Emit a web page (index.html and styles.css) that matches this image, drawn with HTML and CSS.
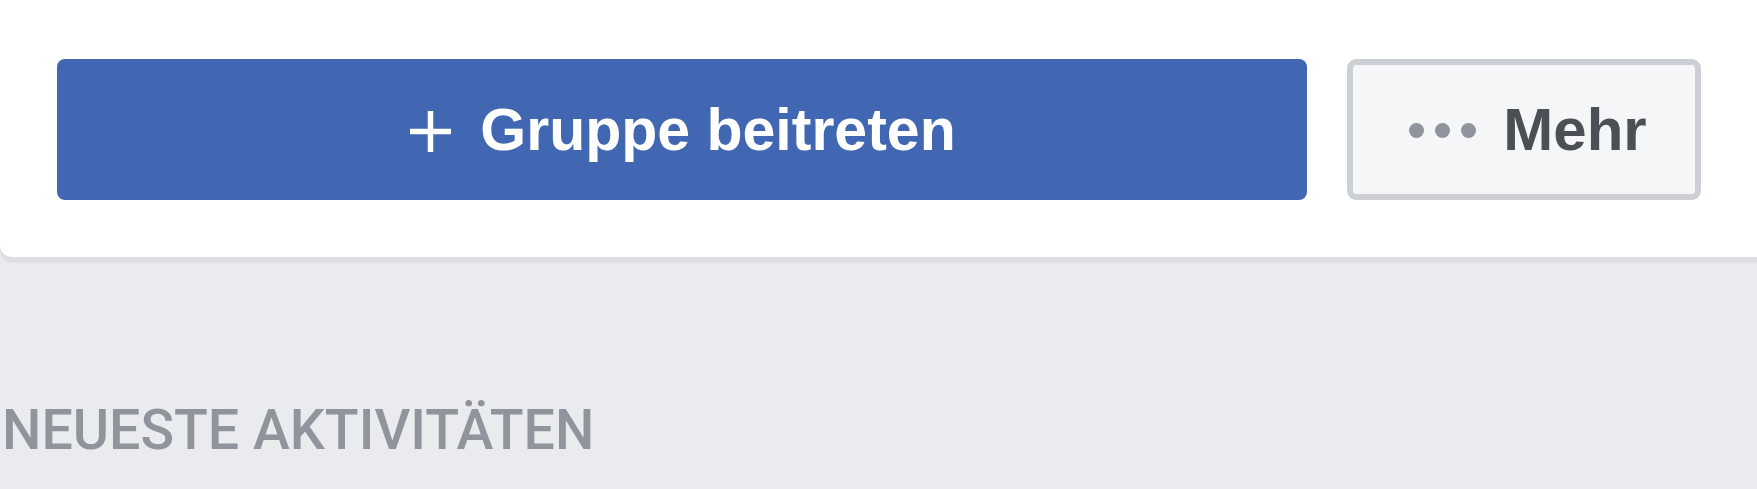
FILE: index.html
```html
<!DOCTYPE html>
<html lang="de">
<head>
<meta charset="UTF-8">
<title>Gruppe</title>
<link rel="stylesheet" href="styles.css">
</head>
<body>

<div class="card">
    <div class="actions">
        <button class="btn-join">
            <svg class="icon-plus" viewBox="0 0 45 45" width="45" height="45"><path d="M22.5 2v41M2 22.5h41" stroke="#fff" stroke-width="5.5" fill="none"/></svg>
            <span>Gruppe beitreten</span>
        </button>
        <button class="btn-more">
            <span class="dots"><i></i><i></i><i></i></span>
            <span>Mehr</span>
        </button>
    </div>
</div>

<h3 class="section-title">NEUESTE AKTIVITÄTEN</h3>

</body>
</html>
```

FILE: styles.css
```css
body { margin: 0; background: #e9ebee; font-family: "Liberation Sans", Arial, sans-serif; }
.card { background: #fff; padding: 59px 56px 57px 57px; border-radius: 0 0 0 12px; box-shadow: 0 6px 0 #dddfe2; }
.actions { display: flex; gap: 40px; height: 141px; }
button { font-family: inherit; font-weight: bold; font-size: 59px; cursor: pointer; display: flex; align-items: center; justify-content: center; padding: 0; }
.btn-join { flex: 1; background: #4267b2; color: #fff; border: none; border-radius: 8px; gap: 27px; }
.icon-plus { display: block; margin-top: 4px; }
.btn-more { width: 354px; background: #f5f6f7; color: #4b4f56; border: 6px solid #ccd0d5; border-radius: 9px; gap: 27px; font-size: 60px; padding-left: 8px; }
.dots { display: flex; gap: 11px; margin-top: 2px; }
.dots i { width: 15px; height: 15px; border-radius: 50%; background: #90949c; }
.section-title { margin: 141px 0 0 0; padding-left: 2px; font-family: Roboto, sans-serif; font-weight: 500; font-size: 55.5px; line-height: 66px; color: #90949c; }
```
